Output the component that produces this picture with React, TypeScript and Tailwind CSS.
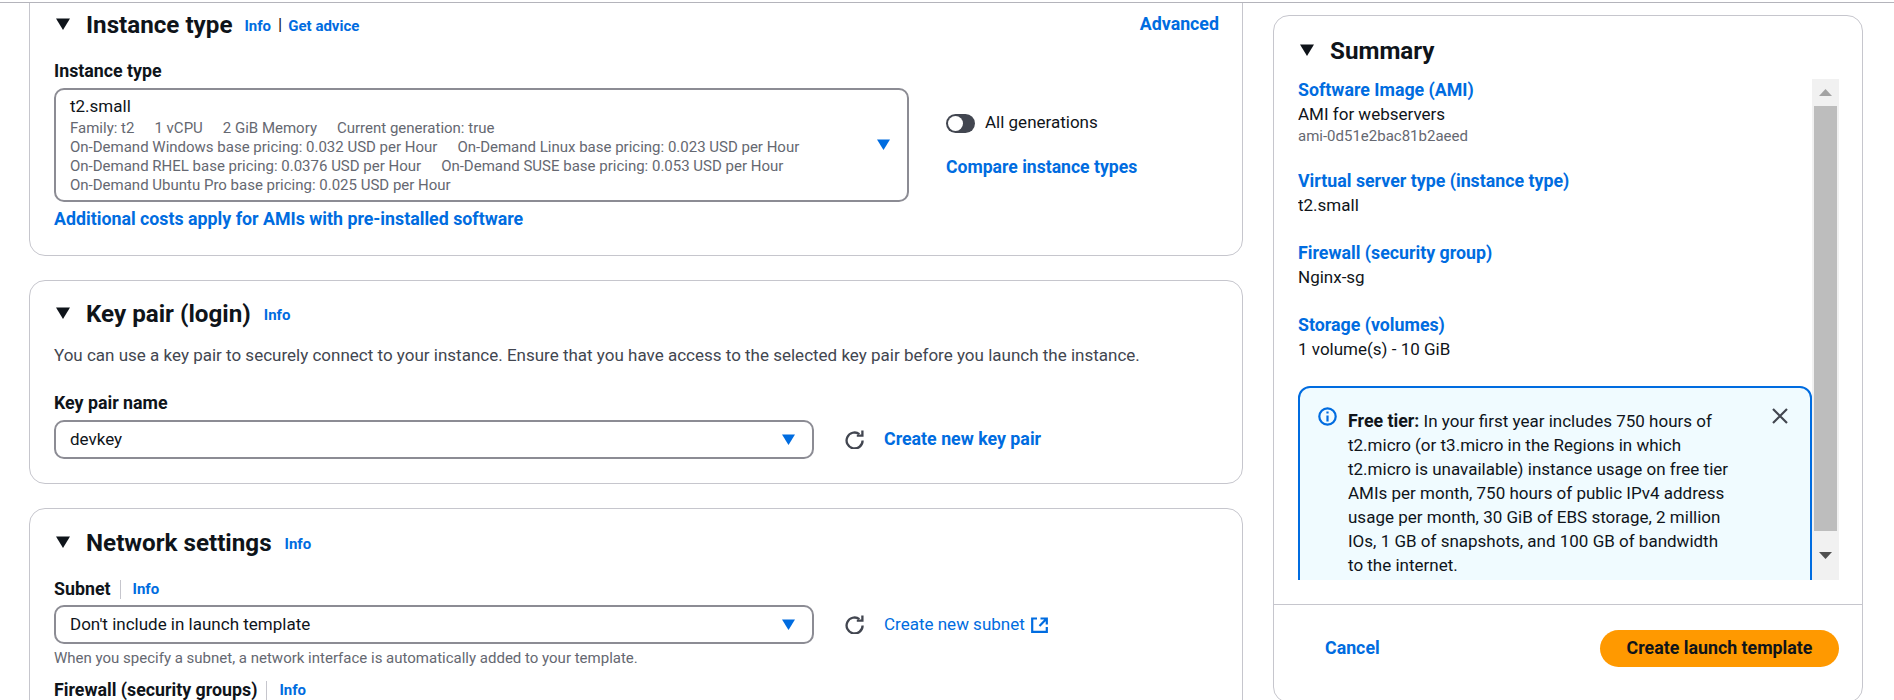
const font = "font-['Roboto',sans-serif]";

function Caret() {
  return (
    <svg className="w-[14px] h-[12px] mr-[16px] shrink-0" viewBox="0 0 14 12">
      <path d="M0 0.5h14L7 12z" fill="#0f141a" />
    </svg>
  );
}

function SelectCaret() {
  return (
    <svg className="w-[13px] h-[11px] shrink-0" viewBox="0 0 13 11">
      <path d="M0 0.5h13L6.5 11z" fill="#006ce0" />
    </svg>
  );
}

function Refresh() {
  return (
    <svg className="w-[19px] h-[19px] shrink-0" viewBox="0 0 19 19" fill="none" stroke="#424650" strokeWidth="2.3">
      <path d="M17.6 10.5a8 8 0 1 1-3.2-6.4" />
      <path d="M17.4 0.5v5.2h-5.6" />
    </svg>
  );
}

function External() {
  return (
    <svg className="w-[17px] h-[16px] shrink-0" viewBox="0 0 17 16" fill="none" stroke="#006ce0" strokeWidth="2.2">
      <path d="M6 1.5H1.2v13.3h14.6V10" />
      <path d="M9.5 1.5h6.3v6M15.5 1.8L8.5 9" />
    </svg>
  );
}

function Info({ className = '' }: { className?: string }) {
  return <a className={`text-[15px] font-bold text-[#006ce0] leading-[20px] ${className}`}>Info</a>;
}

function CardHeader({ title, children }: { title: string; children?: React.ReactNode }) {
  return (
    <div className="flex items-center h-[24px] pl-[2px]">
      <Caret />
      <h2 className="mt-[1px] text-[24.2px] font-bold leading-[24px] text-[#0f141a]">{title}</h2>
      {children}
    </div>
  );
}

function Field({ label, info }: { label: string; info?: boolean }) {
  return (
    <div className="flex items-center h-[20px] leading-[20px] text-[17.8px] font-bold text-[#0f141a]">
      <span>{label}</span>
      {info && (
        <>
          <span className="w-px h-[19px] bg-[#c6c6cd] mx-[9px]" />
          <Info className="ml-[3px]" />
        </>
      )}
    </div>
  );
}

function SelectRow({ value, link, external }: { value: string; link: string; external?: boolean }) {
  return (
    <div className="flex items-center">
      <div className="w-[760px] h-[39px] flex items-center justify-between border-2 border-[#8c8c94] rounded-[10px] pl-[14px] pr-[17px] text-[17px] text-[#0f141a]">
        <span>{value}</span>
        <SelectCaret />
      </div>
      <div className="ml-[31px]">
        <Refresh />
      </div>
      <a className={`ml-[20px] text-[#006ce0] flex items-center gap-[6px] ${external ? 'text-[17px] font-normal' : 'text-[17.8px] font-bold'}`}>
        {link}
        {external && <External />}
      </a>
    </div>
  );
}

function SummaryItem({ title, value, sub, top }: { title: string; value: string; sub?: string; top: string }) {
  return (
    <div className={top}>
      <a className="block h-[20px] leading-[20px] text-[17.8px] font-bold text-[#006ce0]">{title}</a>
      <div className="mt-[4px] h-[20px] leading-[20px] text-[17px] text-[#0f141a]">{value}</div>
      {sub && <div className="mt-[4px] h-[16px] leading-[16px] text-[15px] text-[#656871]">{sub}</div>}
    </div>
  );
}

const pricing = [
  ['Family: t2', '1 vCPU', '2 GiB Memory', 'Current generation: true'],
  ['On-Demand Windows base pricing: 0.032 USD per Hour', 'On-Demand Linux base pricing: 0.023 USD per Hour'],
  ['On-Demand RHEL base pricing: 0.0376 USD per Hour', 'On-Demand SUSE base pricing: 0.053 USD per Hour'],
  ['On-Demand Ubuntu Pro base pricing: 0.025 USD per Hour'],
];

export default function App() {
  return (
    <div className={`h-[700px] overflow-hidden bg-white ${font}`}>
      <div className="h-[3px] border-b border-[#b4b4bb]" />
      <div className="flex pl-[29px] h-[697px] overflow-hidden">
        <div className="w-[1214px] shrink-0 -mt-[20px]">
          <section className="border border-[#c6c6cd] rounded-[16px] pt-[28px] pb-[26px] pl-[24px] pr-[23px]">
            <div className="flex items-center justify-between h-[24px]">
              <CardHeader title="Instance type">
                <Info className="ml-[12px] mt-[4px]" />
                <span className="text-[17px] text-[#0f141a] ml-[7px] mr-[6px] mt-[2px]">|</span>
                <a className="text-[15px] font-bold text-[#006ce0] mt-[4px]">Get advice</a>
              </CardHeader>
              <a className="text-[17.8px] leading-[20px] font-bold text-[#006ce0]">Advanced</a>
            </div>
            <div className="mt-[25px]">
              <Field label="Instance type" />
            </div>
            <div className="flex mt-[7px]">
              <div className="w-[855px] h-[114px] border-2 border-[#8c8c94] rounded-[10px] pl-[14px] pr-[17px] pt-[6px] relative">
                <div className="h-[20px] leading-[20px] text-[17px] text-[#0f141a]">t2.small</div>
                <div className="mt-[3px] text-[15px] leading-[19px] text-[#656871] whitespace-nowrap">
                  {pricing.map((line) => (
                    <div key={line[0]} className="flex gap-[20px]">
                      {line.map((part) => (
                        <span key={part}>{part}</span>
                      ))}
                    </div>
                  ))}
                </div>
                <div className="absolute right-[17px] top-[49px]">
                  <SelectCaret />
                </div>
              </div>
              <div className="ml-[37px] pt-[25px]">
                <div className="flex items-center h-[20px] gap-[10px] text-[17px] text-[#0f141a]">
                  <span className="w-[29px] h-[19px] rounded-full bg-[#424650] flex items-center pl-[2px]">
                    <span className="w-[15px] h-[15px] rounded-full bg-white" />
                  </span>
                  All generations
                </div>
                <a className="block mt-[24px] h-[20px] leading-[20px] text-[17.6px] font-bold text-[#006ce0]">Compare instance types</a>
              </div>
            </div>
            <a className="block mt-[7px] h-[20px] leading-[20px] text-[17.8px] font-bold text-[#006ce0]">Additional costs apply for AMIs with pre-installed software</a>
          </section>

          <section className="mt-[24px] h-[204px] border border-[#c6c6cd] rounded-[16px] pt-[20px] pl-[24px] pr-[23px]">
            <CardHeader title="Key pair (login)">
              <Info className="ml-[13px] mt-[4px]" />
            </CardHeader>
            <p className="mt-[20px] h-[20px] leading-[20px] text-[17px] text-[#424650]">
              You can use a key pair to securely connect to your instance. Ensure that you have access to the selected key pair before you launch the instance.
            </p>
            <div className="mt-[28px] mb-[7px]">
              <Field label="Key pair name" />
            </div>
            <SelectRow value="devkey" link="Create new key pair" />
          </section>

          <section className="mt-[24px] border border-[#c6c6cd] rounded-[16px] pt-[21px] pb-[40px] pl-[24px] pr-[23px]">
            <CardHeader title="Network settings">
              <Info className="ml-[13px] mt-[4px]" />
            </CardHeader>
            <div className="mt-[25px] mb-[6px]">
              <Field label="Subnet" info />
            </div>
            <SelectRow value="Don't include in launch template" link="Create new subnet" external />
            <div className="mt-[6px] h-[16px] leading-[16px] text-[15px] text-[#656871]">
              When you specify a subnet, a network interface is automatically added to your template.
            </div>
            <div className="mt-[14px]">
              <Field label="Firewall (security groups)" info />
            </div>
          </section>
        </div>

        <aside className="w-[590px] shrink-0 ml-[30px] mt-[12px] h-[688px] border border-[#c6c6cd] rounded-[16px] pt-[22px]">
          <div className="pl-[24px]">
            <CardHeader title="Summary" />
          </div>
          <div className="mt-[17px] h-[501px] pl-[24px] pr-[23px] flex">
            <div className="w-[514px] flex flex-col overflow-hidden pt-[1px]">
              <SummaryItem title="Software Image (AMI)" value="AMI for webservers" sub="ami-0d51e2bac81b2aeed" top="" />
              <SummaryItem title="Virtual server type (instance type)" value="t2.small" top="mt-[27px]" />
              <SummaryItem title="Firewall (security group)" value="Nginx-sg" top="mt-[28px]" />
              <SummaryItem title="Storage (volumes)" value="1 volume(s) - 10 GiB" top="mt-[28px]" />
              <div className="mt-[27px] h-[300px] shrink-0 flex border-2 border-[#006ce0] rounded-[12px] bg-[#f0fbff] pl-[18px] pt-[19px]">
                <svg className="w-[19px] h-[19px] shrink-0" viewBox="0 0 19 19" fill="none" stroke="#006ce0" strokeWidth="2.2">
                  <circle cx="9.5" cy="9.5" r="8.2" />
                  <path d="M9.5 8.5v6M9.5 4.4v2" />
                </svg>
                <p className="ml-[11px] mt-[2px] text-[17px] leading-[24px] text-[#0f141a] whitespace-nowrap">
                  <b className="text-[17.8px]">Free tier:</b> In your first year includes 750 hours of
                  <br />
                  t2.micro (or t3.micro in the Regions in which
                  <br />
                  t2.micro is unavailable) instance usage on free tier
                  <br />
                  AMIs per month, 750 hours of public IPv4 address
                  <br />
                  usage per month, 30 GiB of EBS storage, 2 million
                  <br />
                  IOs, 1 GB of snapshots, and 100 GB of bandwidth
                  <br />
                  to the internet.
                </p>
                <svg className="w-[16px] h-[16px] ml-auto mr-[22px] mt-[1px] shrink-0" viewBox="0 0 16 16" fill="none" stroke="#424650" strokeWidth="2.2">
                  <path d="M1 1l14 14M15 1L1 15" />
                </svg>
              </div>
            </div>
            <div className="w-[27px] h-full bg-[#f1f1f1] flex flex-col items-center">
              <div className="h-[27px] flex items-center">
                <svg className="w-[13px] h-[7px]" viewBox="0 0 13 7"><path d="M6.5 0L13 7H0z" fill="#a3a3a3" /></svg>
              </div>
              <div className="w-[23px] h-[425px] bg-[#bdbdbd]" />
              <div className="flex-1 flex items-center">
                <svg className="w-[13px] h-[7px]" viewBox="0 0 13 7"><path d="M0 0h13L6.5 7z" fill="#505050" /></svg>
              </div>
            </div>
          </div>
          <div className="mt-[24px] border-t border-[#c6c6cd] pt-[25px] pl-[51px] pr-[23px] flex items-center justify-between">
            <a className="text-[17.8px] font-bold text-[#006ce0]">Cancel</a>
            <button className="w-[239px] h-[37px] rounded-full bg-[#ff9900] text-[17.8px] font-bold text-[#0f141a]">Create launch template</button>
          </div>
        </aside>
      </div>
    </div>
  );
}
